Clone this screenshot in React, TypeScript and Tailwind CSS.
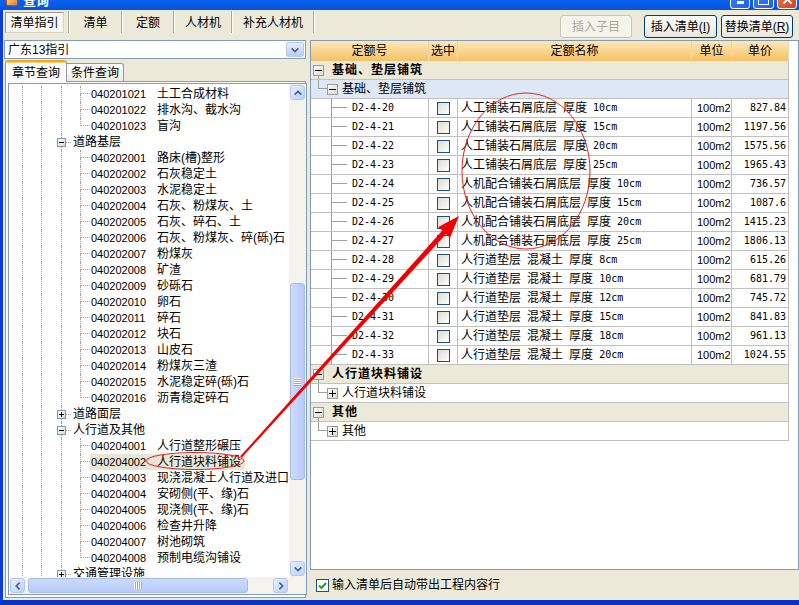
import React from "react";

const MONO = "font-[family-name:DejaVu_Sans_Mono,Noto_Sans_CJK_SC,monospace] text-[10px] leading-none";
const TAHOMA = "font-[family-name:Liberation_Sans,Noto_Sans_CJK_SC,sans-serif] text-[11px] leading-none";

type Leaf = { t: "leaf"; code: string; name: string; last?: boolean; sel?: boolean };
type Group = { t: "group"; name: string; open: boolean };
type TreeRow = Leaf | Group;

const tree: TreeRow[] = [
  { t: "leaf", code: "040201021", name: "土工合成材料" },
  { t: "leaf", code: "040201022", name: "排水沟、截水沟" },
  { t: "leaf", code: "040201023", name: "盲沟", last: true },
  { t: "group", name: "道路基层", open: true },
  { t: "leaf", code: "040202001", name: "路床(槽)整形" },
  { t: "leaf", code: "040202002", name: "石灰稳定土" },
  { t: "leaf", code: "040202003", name: "水泥稳定土" },
  { t: "leaf", code: "040202004", name: "石灰、粉煤灰、土" },
  { t: "leaf", code: "040202005", name: "石灰、碎石、土" },
  { t: "leaf", code: "040202006", name: "石灰、粉煤灰、碎(砾)石" },
  { t: "leaf", code: "040202007", name: "粉煤灰" },
  { t: "leaf", code: "040202008", name: "矿渣" },
  { t: "leaf", code: "040202009", name: "砂砾石" },
  { t: "leaf", code: "040202010", name: "卵石" },
  { t: "leaf", code: "040202011", name: "碎石" },
  { t: "leaf", code: "040202012", name: "块石" },
  { t: "leaf", code: "040202013", name: "山皮石" },
  { t: "leaf", code: "040202014", name: "粉煤灰三渣" },
  { t: "leaf", code: "040202015", name: "水泥稳定碎(砾)石" },
  { t: "leaf", code: "040202016", name: "沥青稳定碎石", last: true },
  { t: "group", name: "道路面层", open: false },
  { t: "group", name: "人行道及其他", open: true },
  { t: "leaf", code: "040204001", name: "人行道整形碾压" },
  { t: "leaf", code: "040204002", name: "人行道块料铺设", sel: true },
  { t: "leaf", code: "040204003", name: "现浇混凝土人行道及进口" },
  { t: "leaf", code: "040204004", name: "安砌侧(平、缘)石" },
  { t: "leaf", code: "040204005", name: "现浇侧(平、缘)石" },
  { t: "leaf", code: "040204006", name: "检查井升降" },
  { t: "leaf", code: "040204007", name: "树池砌筑" },
  { t: "leaf", code: "040204008", name: "预制电缆沟铺设", last: true },
  { t: "group", name: "交通管理设施", open: false },
];

const quotas = [
  ["D2-4-20", "人工铺装石屑底层 厚度 10cm", "827.84"],
  ["D2-4-21", "人工铺装石屑底层 厚度 15cm", "1197.56"],
  ["D2-4-22", "人工铺装石屑底层 厚度 20cm", "1575.56"],
  ["D2-4-23", "人工铺装石屑底层 厚度 25cm", "1965.43"],
  ["D2-4-24", "人机配合铺装石屑底层 厚度 10cm", "736.57"],
  ["D2-4-25", "人机配合铺装石屑底层 厚度 15cm", "1087.6"],
  ["D2-4-26", "人机配合铺装石屑底层 厚度 20cm", "1415.23"],
  ["D2-4-27", "人机配合铺装石屑底层 厚度 25cm", "1806.13"],
  ["D2-4-28", "人行道垫层 混凝土 厚度 8cm", "615.26"],
  ["D2-4-29", "人行道垫层 混凝土 厚度 10cm", "681.79"],
  ["D2-4-30", "人行道垫层 混凝土 厚度 12cm", "745.72"],
  ["D2-4-31", "人行道垫层 混凝土 厚度 15cm", "841.83"],
  ["D2-4-32", "人行道垫层 混凝土 厚度 18cm", "961.13"],
  ["D2-4-33", "人行道垫层 混凝土 厚度 20cm", "1024.55"],
];

function PmBox({ plus, size, border }: { plus: boolean; size: number; border: string }) {
  const c = (size - 1) / 2;
  return (
    <svg width={size} height={size} className="block shrink-0">
      <defs>
        <linearGradient id={`pm${size}`} x1="0" y1="0" x2="1" y2="1">
          <stop offset="0" stopColor="#ffffff" />
          <stop offset="1" stopColor="#d8d6cc" />
        </linearGradient>
      </defs>
      <rect x="0.5" y="0.5" width={size - 1} height={size - 1} fill={`url(#pm${size})`} stroke={border} />
      <path d={`M2 ${c + 0.5}H${size - 2}`} stroke="#000" />
      {plus && <path d={`M${c + 0.5} 2V${size - 2}`} stroke="#000" />}
    </svg>
  );
}

function Arrow({ dir }: { dir: "up" | "down" | "left" | "right" }) {
  const d = { up: "M2 8l4-4 4 4", down: "M2 4l4 4 4-4", left: "M8 2l-4 4 4 4", right: "M4 2l4 4-4 4" }[dir];
  return (
    <svg width="10" height="10" viewBox="0 0 12 12">
      <path d={d} fill="none" stroke="#4d6185" strokeWidth="2" />
    </svg>
  );
}

function SbBtn({ dir }: { dir: "up" | "down" | "left" | "right" }) {
  return (
    <div className="w-[17px] h-[17px] shrink-0 p-[1px]">
      <div className="w-full h-full rounded-[3px] border border-[#b4c8f6] bg-gradient-to-br from-[#e8effd] to-[#bccff8] flex items-center justify-center">
        <Arrow dir={dir} />
      </div>
    </div>
  );
}

function TitleBar() {
  return (
    <div className="h-[10px] shrink-0 overflow-hidden bg-gradient-to-b from-[#0b62ee] to-[#0553dd]">
      <div className="h-[30px] -mt-[15px] flex items-center pl-[6px] pr-[2px]">
        <div className="w-[12px] h-[12px] rounded-[2px] border border-[#b05a10] bg-gradient-to-br from-[#ffe08a] to-[#e47a1c]" />
        <span className="ml-[5px] text-white font-bold text-[13px] leading-none">查询</span>
        <div className="flex-1" />
        <div className="self-end mb-[6px] flex gap-[3px]">
          <div className="w-[20px] h-[21px] rounded-[3px] border border-white bg-gradient-to-br from-[#3c82fa] to-[#1a5ef0] flex items-end justify-center pb-[4px]">
            <div className="w-[7px] h-[3px] bg-white" />
          </div>
          <div className="w-[21px] h-[21px] rounded-[3px] border border-white bg-gradient-to-br from-[#3c82fa] to-[#1a5ef0] flex items-end justify-center pb-[3px]">
            <div className="w-[11px] h-[10px] border border-white border-t-[3px]" />
          </div>
          <div className="w-[20px] h-[21px] rounded-[3px] border border-white bg-gradient-to-br from-[#ec7a55] to-[#d1401e] flex items-end justify-center pb-[3px]">
            <svg width="11" height="11" viewBox="0 0 11 11">
              <path d="M1.5 1.5l8 8M9.5 1.5l-8 8" stroke="#fff" strokeWidth="2" />
            </svg>
          </div>
        </div>
      </div>
    </div>
  );
}

function Sep() {
  return <div className="mt-[1px] w-[2px] h-[22px] shrink-0 border-l border-r border-[#aca899] border-r-white" />;
}

function Toolbar() {
  return (
    <div className="h-[30px] shrink-0 flex items-start">
      <div className="mt-[2px] ml-[2px] w-[59px] h-[21px] shrink-0 flex items-center justify-center border border-[#9d9a8c] border-b-[#d6d3c6] border-r-[#d6d3c6] bg-[#f7f6f1]">
        清单指引
      </div>
      <div className="w-[4px] shrink-0" />
      <Sep />
      <div className="mt-[2px] w-[51px] h-[21px] shrink-0 flex items-center justify-center">清单</div>
      <Sep />
      <div className="mt-[2px] w-[50px] h-[21px] shrink-0 flex items-center justify-center">定额</div>
      <Sep />
      <div className="mt-[2px] w-[56px] h-[21px] shrink-0 flex items-center justify-center">人材机</div>
      <Sep />
      <div className="mt-[2px] w-[80px] h-[21px] shrink-0 flex items-center justify-center">补充人材机</div>
      <Sep />
      <div className="flex-1" />
      <div className="mt-[5px] w-[72px] h-[23px] shrink-0 rounded-[3px] border border-[#c9c7ba] bg-[#f5f4ea] text-[#aca899] flex items-center justify-center">
        插入子目
      </div>
      <div className="mt-[5px] ml-[12px] w-[73px] h-[23px] shrink-0 rounded-[3px] border border-[#003c74] bg-gradient-to-b from-white to-[#e6e5de] flex items-center justify-center">
        插入清单(<span className="underline">I</span>)
      </div>
      <div className="mt-[5px] ml-[4px] mr-[6px] w-[72px] h-[23px] shrink-0 rounded-[3px] border border-[#003c74] bg-gradient-to-b from-white to-[#e6e5de] flex items-center justify-center">
        替换清单(<span className="underline">R</span>)
      </div>
    </div>
  );
}

function Guides() {
  return (
    <>
      <div className="w-[13px] shrink-0" />
      <div className="w-[19px] shrink-0 h-full border-l border-dotted border-[#a0a0a0]" />
      <div className="w-[20px] shrink-0 h-full border-l border-dotted border-[#a0a0a0]" />
    </>
  );
}

function TreeLine({ row }: { row: TreeRow }) {
  if (row.t === "group") {
    return (
      <div className="h-[16px] flex whitespace-nowrap">
        <Guides />
        <div className="h-full flex items-center border-l border-dotted border-[#a0a0a0]">
          <div className="-ml-[5px]">
            <PmBox plus={!row.open} size={9} border="#7898b5" />
          </div>
          <div className="w-[5px] border-t border-dotted border-[#a0a0a0]" />
          <span className="ml-[2px] leading-none">{row.name}</span>
        </div>
      </div>
    );
  }
  return (
    <div className="h-[16px] flex whitespace-nowrap">
      <Guides />
      <div className="w-[19px] shrink-0 h-full border-l border-dotted border-[#a0a0a0]" />
      <div className="w-[10px] shrink-0 h-full flex flex-col">
        <div className="h-[8px] border-l border-b border-dotted border-[#a0a0a0]" />
        <div className={row.last ? "flex-1" : "flex-1 border-l border-dotted border-[#a0a0a0]"} />
      </div>
      <div className={row.sel ? "flex items-center h-full bg-[#e9e6d8] pr-[4px]" : "flex items-center h-full"}>
        <span className={`w-[67px] pl-[1px] shrink-0 ${TAHOMA}`}>{row.code}</span>
        <span className="leading-none">{row.name}</span>
      </div>
    </div>
  );
}

function TreeBox() {
  return (
    <div className="flex-1 min-h-0 border border-[#7f9db9] bg-white flex flex-col">
      <div className="flex-1 min-h-0 flex">
        <div className="flex-1 min-w-0 overflow-hidden pt-[2px]">
          {tree.map((r, i) => (
            <TreeLine key={i} row={r} />
          ))}
        </div>
        <div className="w-[17px] shrink-0 flex flex-col bg-[#f4f3ee]">
          <SbBtn dir="up" />
          <div className="h-[182px] shrink-0" />
          <div className="h-[197px] shrink-0 px-[1px]">
            <div className="w-full h-full rounded-[3px] border border-[#a7bdf0] bg-gradient-to-r from-[#cddafc] to-[#b6caf7] flex flex-col items-center justify-center">
              <div className="w-[7px] h-[2px] border-t border-b border-white border-b-[#8eaaf0]" />
              <div className="w-[7px] h-[2px] border-t border-b border-white border-b-[#8eaaf0]" />
              <div className="w-[7px] h-[2px] border-t border-b border-white border-b-[#8eaaf0]" />
              <div className="w-[7px] h-[2px] border-t border-b border-white border-b-[#8eaaf0]" />
            </div>
          </div>
          <div className="flex-1" />
          <SbBtn dir="down" />
        </div>
      </div>
      <div className="h-[17px] shrink-0 flex bg-[#f4f3ee]">
        <SbBtn dir="left" />
        <div className="w-[2px] shrink-0" />
        <div className="w-[220px] shrink-0 py-[1px]">
          <div className="w-full h-full rounded-[3px] border border-[#a7bdf0] bg-gradient-to-b from-[#cddafc] to-[#b6caf7] flex items-center justify-center">
            <div className="w-[2px] h-[7px] border-l border-r border-white border-r-[#8eaaf0]" />
            <div className="w-[2px] h-[7px] border-l border-r border-white border-r-[#8eaaf0]" />
            <div className="w-[2px] h-[7px] border-l border-r border-white border-r-[#8eaaf0]" />
            <div className="w-[2px] h-[7px] border-l border-r border-white border-r-[#8eaaf0]" />
          </div>
        </div>
        <div className="flex-1" />
        <SbBtn dir="right" />
        <div className="w-[17px] shrink-0" />
      </div>
    </div>
  );
}

function LeftColumn() {
  return (
    <div className="w-[302px] shrink-0 flex flex-col">
      <div className="h-[19px] shrink-0 border border-[#7f9db9] bg-white flex items-center">
        <span className="pl-[3px] flex-1 leading-none">广东13指引</span>
        <div className="w-[18px] h-[15px] mr-[1px] rounded-[2px] border border-[#b4c8f6] bg-gradient-to-b from-[#e6eefd] to-[#b9cdf7] flex items-center justify-center">
          <Arrow dir="down" />
        </div>
      </div>
      <div className="mt-[1px] h-[21px] shrink-0 flex items-end pl-[1px]">
        <div className="relative z-10 -mb-[1px] w-[62px] h-[22px] shrink-0 flex flex-col bg-[#fcfcfe] border-l border-r border-[#919b9c] rounded-t-[3px] overflow-hidden">
          <div className="h-[3px] shrink-0 bg-[#f5a623] border-b border-[#ffd06a]" />
          <div className="flex-1 flex items-center pl-[6px] leading-none">章节查询</div>
        </div>
        <div className="w-[57px] h-[18px] shrink-0 border-t border-r border-[#919b9c] rounded-tr-[3px] bg-gradient-to-b from-white to-[#ecebe5] flex items-center pl-[4px] leading-none">
          条件查询
        </div>
      </div>
      <div className="flex-1 min-h-0 mb-[2px] ml-[1px] border border-[#919b9c] bg-[#fcfcfe] px-[2px] pt-[1px] pb-[2px] flex">
        <TreeBox />
      </div>
    </div>
  );
}

function Mixed({ text }: { text: string }) {
  const parts = text.split(/([\x20-\x7e]+)/);
  return (
    <>
      {parts.map((p, i) =>
        p === "" ? null : /^[\x20-\x7e]+$/.test(p) ? (
          <span key={i} className={MONO}>
            {p}
          </span>
        ) : (
          <span key={i} className="leading-none">
            {p}
          </span>
        )
      )}
    </>
  );
}

function GroupRow({ name }: { name: string }) {
  return (
    <div className="h-[19px] w-[478px] flex items-center bg-[#ece9d8] border-b border-r border-[#c0c0c0]">
      <div className="ml-[2px] w-[11px] h-full flex flex-col">
        <div className="h-[4px] shrink-0" />
        <PmBox plus={false} size={11} border="#9a9a9a" />
        <div className="flex-1 w-[6px] border-r border-[#a0a0a0]" />
      </div>
      <span className="ml-[8px] font-bold tracking-[1px] leading-none">{name}</span>
    </div>
  );
}

function SubRow({ name, open, blue }: { name: string; open: boolean; blue?: boolean }) {
  return (
    <div
      className={
        blue
          ? "h-[19px] w-[478px] flex bg-[#dde7f5] border-b border-r border-[#c0c0c0]"
          : "h-[19px] w-[478px] flex bg-white border-b border-r border-[#c0c0c0]"
      }
    >
      <div className="w-[7px] shrink-0" />
      <div className="w-[9px] h-[9px] shrink-0 border-l border-b border-[#a0a0a0]" />
      <div className="flex items-center">
        <PmBox plus={!open} size={11} border="#9a9a9a" />
      </div>
      <span className="ml-[4px] self-center leading-none">{name}</span>
    </div>
  );
}

function DataRow({ code, name, price }: { code: string; name: string; price: string }) {
  return (
    <div className="h-[19px] w-[478px] flex border-b border-[#c0c0c0] whitespace-pre">
      <div className="w-[118px] shrink-0 flex border-r border-[#c0c0c0]">
        <div className="w-[20px] shrink-0" />
        <div className="w-[16px] shrink-0 h-full border-l border-[#a0a0a0]">
          <div className="h-[9px] border-b border-[#a0a0a0]" />
        </div>
        <span className={`pl-[5px] self-center ${MONO}`}>{code}</span>
      </div>
      <div className="w-[29px] shrink-0 flex items-center justify-center border-r border-[#c0c0c0]">
        <div className="w-[13px] h-[13px] border border-[#1c5180] bg-gradient-to-br from-[#dcdbd3] to-white" />
      </div>
      <div className="w-[234px] shrink-0 flex items-center pl-[3px] border-r border-[#c0c0c0] overflow-hidden">
        <Mixed text={name} />
      </div>
      <div className={`w-[40px] shrink-0 flex items-center pl-[5px] border-r border-[#c0c0c0] ${TAHOMA}`}>100m2</div>
      <div className="w-[57px] shrink-0 flex items-center justify-end pr-[2px] border-r border-[#c0c0c0]">
        <span className={MONO}>{price}</span>
      </div>
    </div>
  );
}

function RightColumn() {
  return (
    <div className="flex-1 min-w-0 flex flex-col">
      <div className="h-[530px] shrink-0 border border-[#7f9db9] bg-white overflow-hidden">
        <div className="h-[20px] w-[478px] flex bg-gradient-to-b from-[#fde7b8] to-[#f5c164]">
          <div className="w-[118px] shrink-0 flex items-center justify-center border-r border-[#e8d7b2]">定额号</div>
          <div className="w-[29px] shrink-0 flex items-center justify-center border-r border-[#e8d7b2]">选中</div>
          <div className="w-[234px] shrink-0 flex items-center justify-center border-r border-[#e8d7b2]">定额名称</div>
          <div className="w-[40px] shrink-0 flex items-center justify-center border-r border-[#e8d7b2]">单位</div>
          <div className="w-[57px] shrink-0 flex items-center justify-center border-r border-[#e8d7b2]">单价</div>
        </div>
        <GroupRow name="基础、垫层铺筑" />
        <SubRow name="基础、垫层铺筑" open blue />
        {quotas.map(([c, n, p]) => (
          <DataRow key={c} code={c} name={n} price={p} />
        ))}
        <GroupRow name="人行道块料铺设" />
        <SubRow name="人行道块料铺设" open={false} />
        <GroupRow name="其他" />
        <SubRow name="其他" open={false} />
      </div>
      <div className="flex-1 flex items-center pl-[6px]">
        <div className="w-[13px] h-[13px] border border-[#1c5180] bg-white flex items-center justify-center">
          <svg width="9" height="9" viewBox="0 0 9 9">
            <path d="M1 4.5l2.5 2.5L8 2" fill="none" stroke="#21a121" strokeWidth="2" />
          </svg>
        </div>
        <span className="ml-[3px] leading-none">输入清单后自动带出工程内容行</span>
      </div>
    </div>
  );
}

function Annotations() {
  return (
    <svg className="absolute left-0 top-0 pointer-events-none" width="799" height="605">
      <ellipse cx="526" cy="171" rx="64" ry="78" fill="none" stroke="#e82020" strokeWidth="1" />
      <ellipse cx="195" cy="461" rx="49" ry="8.5" fill="none" stroke="#e82020" strokeWidth="1" />
      <polygon
        points="241.7,457.7 446.1,234.0 450.1,237.7 459,216 438.3,226.9 442.3,230.6 240.3,456.3"
        fill="#f00000"
      />
    </svg>
  );
}

export default function App() {
  return (
    <div className="relative w-[799px] h-[605px] overflow-hidden flex flex-col bg-[#ece9d8] text-[12px] text-black font-[family-name:Liberation_Sans,Noto_Sans_CJK_SC,sans-serif]">
      <TitleBar />
      <div className="flex-1 min-h-0 flex flex-col border-l-[3px] border-b-[5px] border-l-[#0a3ed6] border-b-[#0a33c2]">
        <Toolbar />
        <div className="flex-1 min-h-0 flex pl-[1px]">
          <LeftColumn />
          <div className="w-[4px] shrink-0" />
          <RightColumn />
        </div>
      </div>
      <Annotations />
    </div>
  );
}
